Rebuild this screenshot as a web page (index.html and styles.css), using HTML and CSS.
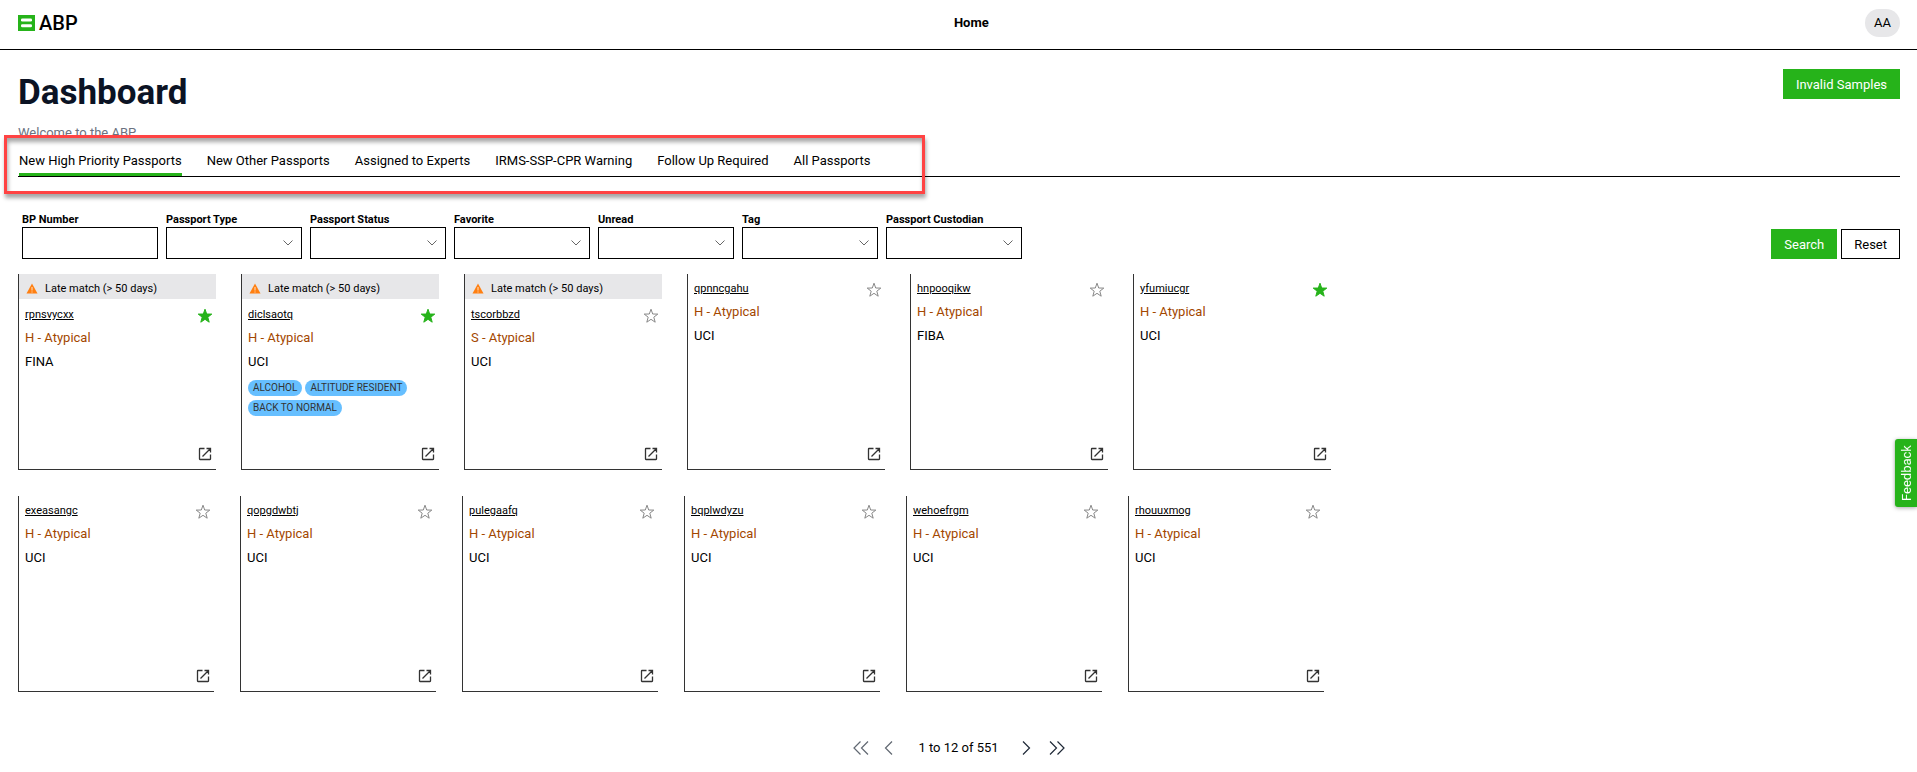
FILE: index.html
```html
<!DOCTYPE html>
<html lang="en">
<head>
    <meta charset="UTF-8">
    <meta name="viewport" content="width=device-width, initial-scale=1.0">
    <title>ABP - Dashboard</title>
    <link rel="stylesheet" href="styles.css">
</head>
<body>
    <!-- Icons -->
    <svg class="sprite" aria-hidden="true">
        <symbol id="star" viewBox="0 0 16 16">
            <path d="M8 1.2 L9.7 6 L14.8 6.1 L10.8 9.2 L12.2 14.2 L8 11.3 L3.8 14.2 L5.2 9.2 L1.2 6.1 L6.3 6 Z"/>
        </symbol>
        <symbol id="open" viewBox="0 0 14 14">
            <path d="M6.5 1.5 H2 Q1.5 1.5 1.5 2 V12 Q1.5 12.5 2 12.5 H12 Q12.5 12.5 12.5 12 V7.5 M8.5 1.5 H12.5 V5.5 M12.5 1.5 L4.5 9.5"/>
        </symbol>
        <symbol id="warning" viewBox="0 0 12 12">
            <path fill="#ff7f11" d="M6 0.5 L11.5 10.5 H0.5 Z"/>
            <path fill="#ffe3c8" d="M5.5 4 H6.5 V7.5 H5.5 Z M5.5 8.5 H6.5 V9.5 H5.5 Z"/>
        </symbol>
        <symbol id="chevron" viewBox="0 0 10 6">
            <path d="M0.5 0.5 L5 5 L9.5 0.5"/>
        </symbol>
    </svg>

    <header class="header">
        <a class="logo" href="#">
            <svg width="17" height="16" viewBox="0 0 17 16">
                <rect width="17" height="16" fill="#26b31a"/>
                <rect x="3" y="3.5" width="11" height="3" rx="1.3" fill="#fff"/>
                <rect x="3" y="9.3" width="11" height="3" rx="1.3" fill="#fff"/>
            </svg>
            ABP
        </a>
        <nav><a class="home" href="#">Home</a></nav>
        <button class="avatar" type="button">AA</button>
    </header>

    <main class="content">
        <div class="title-row">
            <div>
                <h1>Dashboard</h1>
                <p class="welcome">Welcome to the ABP</p>
            </div>
            <button class="btn btn-green" type="button">Invalid Samples</button>
        </div>

        <nav class="tabs">
            <a class="tab active" href="#">New High Priority Passports</a>
            <a class="tab" href="#">New Other Passports</a>
            <a class="tab" href="#">Assigned to Experts</a>
            <a class="tab" href="#">IRMS-SSP-CPR Warning</a>
            <a class="tab" href="#">Follow Up Required</a>
            <a class="tab" href="#">All Passports</a>
            <div class="highlight"></div>
        </nav>

        <form class="filters">
            <div class="field">
                <label for="bpNumber">BP Number</label>
                <input type="text" id="bpNumber">
            </div>
            <div class="field">
                <label for="passportType">Passport Type</label>
                <div class="select"><select id="passportType"><option></option></select><svg><use href="#chevron"/></svg></div>
            </div>
            <div class="field">
                <label for="passportStatus">Passport Status</label>
                <div class="select"><select id="passportStatus"><option></option></select><svg><use href="#chevron"/></svg></div>
            </div>
            <div class="field">
                <label for="favorite">Favorite</label>
                <div class="select"><select id="favorite"><option></option></select><svg><use href="#chevron"/></svg></div>
            </div>
            <div class="field">
                <label for="unread">Unread</label>
                <div class="select"><select id="unread"><option></option></select><svg><use href="#chevron"/></svg></div>
            </div>
            <div class="field">
                <label for="tag">Tag</label>
                <div class="select"><select id="tag"><option></option></select><svg><use href="#chevron"/></svg></div>
            </div>
            <div class="field">
                <label for="custodian">Passport Custodian</label>
                <div class="select"><select id="custodian"><option></option></select><svg><use href="#chevron"/></svg></div>
            </div>
            <div class="actions">
                <button class="btn btn-green" type="button">Search</button>
                <button class="btn btn-outline" type="reset">Reset</button>
            </div>
        </form>

        <div class="cards">
            <article class="card">
                <div class="late"><svg><use href="#warning"/></svg>Late match (&gt; 50 days)</div>
                <div class="card-body">
                    <div class="card-top"><a href="#">rpnsvycxx</a><button class="icon-btn star on" type="button" aria-label="Favorite"><svg><use href="#star"/></svg></button></div>
                    <p class="status">H - Atypical</p>
                    <p>FINA</p>
                    <button class="icon-btn open" type="button" aria-label="Open"><svg><use href="#open"/></svg></button>
                </div>
            </article>
            <article class="card">
                <div class="late"><svg><use href="#warning"/></svg>Late match (&gt; 50 days)</div>
                <div class="card-body">
                    <div class="card-top"><a href="#">diclsaotq</a><button class="icon-btn star on" type="button" aria-label="Favorite"><svg><use href="#star"/></svg></button></div>
                    <p class="status">H - Atypical</p>
                    <p>UCI</p>
                    <div class="tags">
                        <span>ALCOHOL</span>
                        <span>ALTITUDE RESIDENT</span>
                        <span>BACK TO NORMAL</span>
                    </div>
                    <button class="icon-btn open" type="button" aria-label="Open"><svg><use href="#open"/></svg></button>
                </div>
            </article>
            <article class="card">
                <div class="late"><svg><use href="#warning"/></svg>Late match (&gt; 50 days)</div>
                <div class="card-body">
                    <div class="card-top"><a href="#">tscorbbzd</a><button class="icon-btn star" type="button" aria-label="Favorite"><svg><use href="#star"/></svg></button></div>
                    <p class="status">S - Atypical</p>
                    <p>UCI</p>
                    <button class="icon-btn open" type="button" aria-label="Open"><svg><use href="#open"/></svg></button>
                </div>
            </article>
            <article class="card">
                <div class="card-body">
                    <div class="card-top"><a href="#">qpnncgahu</a><button class="icon-btn star" type="button" aria-label="Favorite"><svg><use href="#star"/></svg></button></div>
                    <p class="status">H - Atypical</p>
                    <p>UCI</p>
                    <button class="icon-btn open" type="button" aria-label="Open"><svg><use href="#open"/></svg></button>
                </div>
            </article>
            <article class="card">
                <div class="card-body">
                    <div class="card-top"><a href="#">hnpooqikw</a><button class="icon-btn star" type="button" aria-label="Favorite"><svg><use href="#star"/></svg></button></div>
                    <p class="status">H - Atypical</p>
                    <p>FIBA</p>
                    <button class="icon-btn open" type="button" aria-label="Open"><svg><use href="#open"/></svg></button>
                </div>
            </article>
            <article class="card">
                <div class="card-body">
                    <div class="card-top"><a href="#">yfumiucgr</a><button class="icon-btn star on" type="button" aria-label="Favorite"><svg><use href="#star"/></svg></button></div>
                    <p class="status">H - Atypical</p>
                    <p>UCI</p>
                    <button class="icon-btn open" type="button" aria-label="Open"><svg><use href="#open"/></svg></button>
                </div>
            </article>
        </div>

        <div class="cards cards-narrow">
            <article class="card">
                <div class="card-body">
                    <div class="card-top"><a href="#">exeasangc</a><button class="icon-btn star" type="button" aria-label="Favorite"><svg><use href="#star"/></svg></button></div>
                    <p class="status">H - Atypical</p>
                    <p>UCI</p>
                    <button class="icon-btn open" type="button" aria-label="Open"><svg><use href="#open"/></svg></button>
                </div>
            </article>
            <article class="card">
                <div class="card-body">
                    <div class="card-top"><a href="#">qopgdwbtj</a><button class="icon-btn star" type="button" aria-label="Favorite"><svg><use href="#star"/></svg></button></div>
                    <p class="status">H - Atypical</p>
                    <p>UCI</p>
                    <button class="icon-btn open" type="button" aria-label="Open"><svg><use href="#open"/></svg></button>
                </div>
            </article>
            <article class="card">
                <div class="card-body">
                    <div class="card-top"><a href="#">pulegaafq</a><button class="icon-btn star" type="button" aria-label="Favorite"><svg><use href="#star"/></svg></button></div>
                    <p class="status">H - Atypical</p>
                    <p>UCI</p>
                    <button class="icon-btn open" type="button" aria-label="Open"><svg><use href="#open"/></svg></button>
                </div>
            </article>
            <article class="card">
                <div class="card-body">
                    <div class="card-top"><a href="#">bqplwdyzu</a><button class="icon-btn star" type="button" aria-label="Favorite"><svg><use href="#star"/></svg></button></div>
                    <p class="status">H - Atypical</p>
                    <p>UCI</p>
                    <button class="icon-btn open" type="button" aria-label="Open"><svg><use href="#open"/></svg></button>
                </div>
            </article>
            <article class="card">
                <div class="card-body">
                    <div class="card-top"><a href="#">wehoefrgm</a><button class="icon-btn star" type="button" aria-label="Favorite"><svg><use href="#star"/></svg></button></div>
                    <p class="status">H - Atypical</p>
                    <p>UCI</p>
                    <button class="icon-btn open" type="button" aria-label="Open"><svg><use href="#open"/></svg></button>
                </div>
            </article>
            <article class="card">
                <div class="card-body">
                    <div class="card-top"><a href="#">rhouuxmog</a><button class="icon-btn star" type="button" aria-label="Favorite"><svg><use href="#star"/></svg></button></div>
                    <p class="status">H - Atypical</p>
                    <p>UCI</p>
                    <button class="icon-btn open" type="button" aria-label="Open"><svg><use href="#open"/></svg></button>
                </div>
            </article>
        </div>

        <div class="pager">
            <button type="button" class="dim" aria-label="First page"><svg width="16" height="14" viewBox="0 0 16 14"><path d="M7.5 0.5 L1 7 L7.5 13.5 M15 0.5 L8.5 7 L15 13.5"/></svg></button>
            <button type="button" class="dim" aria-label="Previous page"><svg width="9" height="14" viewBox="0 0 9 14"><path d="M8 0.5 L1.5 7 L8 13.5"/></svg></button>
            <span>1 to 12 of 551</span>
            <button type="button" aria-label="Next page"><svg width="9" height="14" viewBox="0 0 9 14"><path d="M1 0.5 L7.5 7 L1 13.5"/></svg></button>
            <button type="button" aria-label="Last page"><svg width="16" height="14" viewBox="0 0 16 14"><path d="M1 0.5 L7.5 7 L1 13.5 M8.5 0.5 L15 7 L8.5 13.5"/></svg></button>
        </div>
    </main>

    <button class="feedback" type="button">Feedback</button>
</body>
</html>
```
FILE: styles.css
```css
* {
    box-sizing: border-box;
}
body {
    margin: 0;
    font-family: Roboto, "Liberation Sans", sans-serif;
    font-size: 13px;
    line-height: 16px;
    color: #000;
    background: #fff;
}
a {
    color: inherit;
    text-decoration: none;
}
button, input, select {
    font: inherit;
    color: inherit;
}
button {
    cursor: pointer;
}
h1, p {
    margin: 0;
}
.sprite {
    position: absolute;
    width: 0;
    height: 0;
}

/* Header */
.header {
    display: flex;
    align-items: center;
    justify-content: space-between;
    height: 50px;
    padding: 0 17px 4px 18px;
    border-bottom: 1px solid #000;
}
.logo {
    display: flex;
    align-items: center;
    gap: 4px;
    font-size: 20px;
    font-weight: 500;
}
.home {
    font-weight: 700;
}
.avatar {
    width: 35px;
    height: 28px;
    padding: 1px 0 0;
    border: 0;
    border-radius: 14px;
    background: #e7e7e9;
}

/* Title */
.content {
    padding: 19px 17px 0 18px;
}
.title-row {
    display: flex;
    align-items: flex-start;
    justify-content: space-between;
}
h1 {
    font-size: 35px;
    line-height: 48px;
    font-weight: 700;
    color: #0b1324;
}
.welcome {
    margin-top: 8px;
    color: #6b7280;
}
.btn {
    height: 30px;
    padding: 1px 12px 0;
    border: 1px solid #000;
    background: #fff;
}
.btn-green {
    border-color: #26b31a;
    background: #26b31a;
    color: #fff;
}

/* Tabs */
.tabs {
    position: relative;
    display: flex;
    gap: 25px;
    margin-top: 12px;
    padding-left: 1px;
    border-bottom: 1px solid #000;
}
.tab {
    padding-bottom: 4px;
    border-bottom: 3px solid transparent;
}
.tab.active {
    border-bottom-color: #26b31a;
}
.highlight {
    position: absolute;
    top: -18px;
    left: -14px;
    width: 921px;
    height: 59px;
    border: 3px solid #ff4343;
    box-shadow: 1px 4px 4px rgba(0, 0, 0, 0.35), inset 1px 4px 4px rgba(0, 0, 0, 0.35);
    pointer-events: none;
}

/* Filters */
.filters {
    display: flex;
    align-items: flex-end;
    gap: 8px;
    margin-top: 35px;
    padding-left: 4px;
}
.field {
    width: 136px;
}
.field label {
    display: block;
    font-size: 11px;
    line-height: 15px;
    font-weight: 700;
}
.field input, .field select {
    display: block;
    width: 100%;
    height: 32px;
    padding: 0 8px;
    border: 1px solid #000;
    border-radius: 0;
    background: #fff;
    appearance: none;
}
.select {
    position: relative;
}
.select svg {
    position: absolute;
    top: 13px;
    right: 9px;
    width: 10px;
    height: 6px;
    fill: none;
    stroke: #666;
    pointer-events: none;
}
.actions {
    display: flex;
    gap: 4px;
    margin-left: auto;
}

/* Cards */
.cards {
    display: flex;
    gap: 25px;
    margin-top: 15px;
}
.card {
    display: flex;
    flex-direction: column;
    width: 198px;
    height: 196px;
    border-left: 1px solid #333;
    border-bottom: 1px solid #333;
}
.cards-narrow {
    gap: 26px;
    margin-top: 26px;
}
.cards-narrow .card {
    width: 196px;
}
.late {
    display: flex;
    align-items: center;
    gap: 7px;
    height: 25px;
    padding: 4px 7px 0 7px;
    background: #e7e7e9;
    font-size: 11px;
}
.late svg {
    width: 12px;
    height: 12px;
}
.card-body {
    display: flex;
    flex: 1;
    flex-direction: column;
    gap: 8px;
    padding: 7px 3px 8px 6px;
}
.card-top {
    display: flex;
    justify-content: space-between;
    height: 15px;
    font-size: 11px;
}
.late + .card-body {
    padding-top: 8px;
}
.card-top a {
    text-decoration: underline;
}
.status {
    color: #a34700;
}
.icon-btn {
    display: flex;
    padding: 0;
    border: 0;
    background: none;
}
.star {
    padding-top: 1px;
}
.star svg {
    width: 16px;
    height: 16px;
    fill: none;
    stroke: #888;
}
.star.on svg {
    fill: #26b31a;
    stroke: #26b31a;
}
.open {
    align-self: flex-end;
    margin-top: auto;
    margin-right: 1px;
}
.open svg {
    width: 14px;
    height: 14px;
    fill: none;
    stroke: #333;
    stroke-width: 1.3;
}
.tags {
    display: flex;
    flex-wrap: wrap;
    gap: 4px 3px;
    margin-top: 2px;
}
.tags span {
    padding: 0 5px;
    border-radius: 8px;
    background: #66bfff;
    color: #333;
    font-size: 10px;
}

/* Pager */
.pager {
    display: flex;
    align-items: center;
    justify-content: center;
    margin-top: 48px;
}
.pager span {
    margin: 0 23px 0 25px;
}
.pager button {
    display: flex;
    padding: 0;
    border: 0;
    background: none;
}
.pager button:first-child {
    margin-right: 15px;
}
.pager button:last-child {
    margin-left: 18px;
}
.pager svg {
    fill: none;
    stroke: #1f2937;
    stroke-width: 1.2;
}
.pager .dim {
    opacity: 0.7;
}

/* Feedback tab on the side */
.feedback {
    position: fixed;
    right: 0;
    top: 439px;
    width: 22px;
    height: 68px;
    padding: 0 2px 0 0;
    border: 0;
    border-radius: 0 3px 3px 0;
    background: #26b31a;
    box-shadow: 0 -1px 4px rgba(0, 0, 0, 0.35);
    color: #fff;
    writing-mode: vertical-rl;
    transform: rotate(180deg);
}
```
